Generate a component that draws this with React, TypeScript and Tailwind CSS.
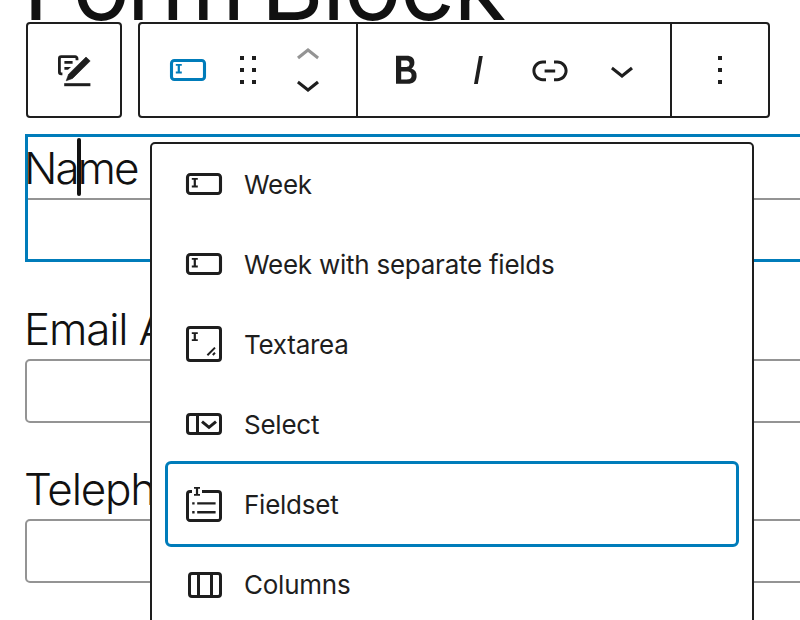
import type { ReactNode } from "react";
import clsx from "clsx";

function Icon({ children, className }: { children: ReactNode; className?: string }) {
  return (
    <svg
      viewBox="0 0 24 24"
      width="48"
      height="48"
      fill="currentColor"
      className={clsx("block shrink-0", className)}
    >
      {children}
    </svg>
  );
}

function EditFormIcon() {
  return (
    <Icon>
      <path
        d="M6.2 13.9H5.6a.9.9 0 0 1-.9-.9V6.2a.9.9 0 0 1 .9-.9h7a.9.9 0 0 1 .9.9v.9"
        fill="none"
        stroke="currentColor"
        strokeWidth="1.4"
      />
      <path d="M7.2 7.5h4.1v1.4H7.2zM7.2 10.5h3.3l-1.5 1.4H7.2z" />
      <path d="M18 5.5 20.1 7.5 11.3 16.2 8.1 17.4 9.3 14.1z" stroke="currentColor" strokeWidth=".3" strokeLinejoin="round" />
      <path d="M7.1 18.6h13.1v1.5H7.1z" />
    </Icon>
  );
}

function InputIcon() {
  return (
    <Icon>
      <rect x="3.75" y="7.25" width="16.5" height="9.5" rx="1.4" fill="none" stroke="currentColor" strokeWidth="1.55" />
      <path d="M5.9 9h3v.9h-.95v2.9h.95v.9h-3v-.9h.95V9.9H5.9z" />
    </Icon>
  );
}

function TextareaIcon() {
  return (
    <Icon>
      <rect x="3.75" y="3.75" width="16.5" height="16.5" rx="1.3" fill="none" stroke="currentColor" strokeWidth="1.5" />
      <path d="M5.9 6.1h3V7h-.95v2.6h.95v.9h-3v-.9h.95V7H5.9z" />
      <path d="m13.7 17.6 3.8-3.8M16.4 17.5l1.1-1.1" fill="none" stroke="currentColor" strokeWidth="1" />
    </Icon>
  );
}

function SelectIcon() {
  return (
    <Icon>
      <rect x="3.75" y="7.25" width="16.5" height="9.5" rx="1.3" fill="none" stroke="currentColor" strokeWidth="1.5" />
      <path d="M8.75 7v10M11 10.8l3.5 2.9 3.5-2.9" fill="none" stroke="currentColor" strokeWidth="1.5" />
    </Icon>
  );
}

function FieldsetIcon() {
  return (
    <Icon>
      <path
        d="M6 5.75H5a1.25 1.25 0 0 0-1.25 1.25V19A1.25 1.25 0 0 0 5 20.25h14A1.25 1.25 0 0 0 20.25 19V7A1.25 1.25 0 0 0 19 5.75h-8"
        fill="none"
        stroke="currentColor"
        strokeWidth="1.5"
      />
      <path d="M7 3.5h3v.9h-.95V7H10v.9H7V7h.95V4.4H7z" />
      <path d="M6.1 11.1h1.2v1.2H6.1zM6.1 15.5h1.2v1.2H6.1zM8.6 11.1h9.2v1.2H8.6zM8.6 15.5h9.2v1.2H8.6z" />
    </Icon>
  );
}

function ColumnsIcon() {
  return (
    <Icon>
      <path
        fillRule="evenodd"
        d="M15 7.5h-5v10h5v-10Zm1.5 0v10H19a.5.5 0 0 0 .5-.5V8a.5.5 0 0 0-.5-.5h-2.5ZM6 7.5h2.5v10H6a.5.5 0 0 1-.5-.5V8a.5.5 0 0 1 .5-.5ZM6 6h13a2 2 0 0 1 2 2v9a2 2 0 0 1-2 2H6a2 2 0 0 1-2-2V8a2 2 0 0 1 2-2Z"
      />
    </Icon>
  );
}

const transforms = [
  { label: "Week", icon: <InputIcon /> },
  { label: "Week with separate fields", icon: <InputIcon /> },
  { label: "Textarea", icon: <TextareaIcon /> },
  { label: "Select", icon: <SelectIcon /> },
  { label: "Fieldset", icon: <FieldsetIcon />, focused: true },
  { label: "Columns", icon: <ColumnsIcon /> },
];

function Toolbar() {
  return (
    <div className="flex h-24 gap-4 pl-[26px]">
      <button className="flex w-24 items-center justify-center rounded-[4px] border-2 border-[#1e1e1e] bg-white">
        <EditFormIcon />
      </button>
      <div className="flex w-[632px] rounded-[4px] border-2 border-[#1e1e1e] bg-white">
        <div className="flex w-[218px] items-center border-r-2 border-[#1e1e1e] pl-6">
          <button className="text-[#007cba]">
            <InputIcon />
          </button>
          <button className="ml-3">
            <Icon>
              <path d="M8 7h2V5H8v2zm0 6h2v-2H8v2zm0 6h2v-2H8v2zm6-14v2h2V5h-2zm0 8h2v-2h-2v2zm0 6h2v-2h-2v2z" />
            </Icon>
          </button>
          <div className="ml-3 flex flex-col">
            <button className="h-7 text-[#949494]">
              <Icon>
                <path d="M6.5 12.4L12 8l5.5 4.4-.9 1.2L12 10l-4.5 3.6-1-1.2z" />
              </Icon>
            </button>
            <button className="h-12">
              <Icon>
                <path d="M17.5 11.6L12 16l-5.5-4.4.9-1.2L12 14l4.5-3.6 1 1.2z" />
              </Icon>
            </button>
          </div>
        </div>
        <div className="flex w-[314px] items-center gap-6 border-r-2 border-[#1e1e1e] pl-6">
          <button>
            <Icon>
              <path d="M14.7 11.3c1-.6 1.5-1.6 1.5-3 0-2.3-1.3-3.4-4-3.4H7v14h5.8c1.4 0 2.5-.3 3.3-1 .8-.7 1.2-1.7 1.2-2.9.1-1.9-.8-3.1-2.6-3.7zm-5.1-4h2.3c.6 0 1.1.1 1.4.4.3.3.5.7.5 1.2s-.2 1-.5 1.2c-.3.3-.8.4-1.4.4H9.6V7.3zm4.6 9c-.4.3-1 .4-1.7.4H9.6v-3.9h2.9c.7 0 1.3.2 1.7.5.4.3.6.8.6 1.5s-.2 1.2-.6 1.5z" />
            </Icon>
          </button>
          <button>
            <Icon>
              <path d="M12.5 5L10 19h1.9l2.5-14z" />
            </Icon>
          </button>
          <button>
            <Icon>
              <path d="M15.6 7.2H14v1.5h1.6c2 0 3.7 1.7 3.7 3.7s-1.7 3.7-3.7 3.7H14v1.5h1.6c2.8 0 5.2-2.3 5.2-5.2 0-2.9-2.3-5.2-5.2-5.2zM4.7 12.4c0-2 1.7-3.7 3.7-3.7H10V7.2H8.4c-2.9 0-5.2 2.3-5.2 5.2 0 2.9 2.3 5.2 5.2 5.2H10v-1.5H8.4c-2 0-3.7-1.7-3.7-3.7zm4.6.9h5.3v-1.5H9.3v1.5z" />
            </Icon>
          </button>
          <button>
            <Icon>
              <path d="M17.5 11.6L12 16l-5.5-4.4.9-1.2L12 14l4.5-3.6 1 1.2z" />
            </Icon>
          </button>
        </div>
        <button className="flex flex-1 items-center justify-center">
          <Icon>
            <path d="M13 19h-2v-2h2v2zm0-6h-2v-2h2v2zm0-6h-2V5h2v2z" />
          </Icon>
        </button>
      </div>
    </div>
  );
}

function TransformMenu() {
  return (
    <div className="absolute left-[150px] top-[142px] h-[520px] w-[604px] rounded-[5px] border-2 border-[#1e1e1e] bg-white px-4">
      {transforms.map(({ label, icon, focused }) => (
        <button
          key={label}
          className={clsx(
            "flex h-20 w-full items-center gap-4 rounded-[3px] pl-3 text-left text-[26px] tracking-[-0.25px]",
            focused && "outline-3 outline-[#007cba]"
          )}
        >
          {icon}
          <span className="pt-px">{label}</span>
        </button>
      ))}
    </div>
  );
}

function Field({ label }: { label: string }) {
  return (
    <label className="block h-[160px]">
      <span className="-ml-px block h-[59px] text-[44px] font-light leading-[59px] tracking-[-1.2px] text-[#111]">
        {label}
      </span>
      <span className="block h-16 w-[900px] rounded-[5px] border-2 border-[#949494] bg-white" />
    </label>
  );
}

export default function App() {
  return (
    <div className="relative h-[620px] w-[800px] overflow-hidden bg-white font-['Inter',sans-serif] text-[#1e1e1e]">
      <div className="flex h-[22px] items-end overflow-hidden pl-[23px]">
        <h1 className="h-[120px] shrink-0 whitespace-nowrap text-[96px] font-[370] leading-[166px] tracking-[-3.3px] [word-spacing:-5px] text-[#111]">
          Form <span className="tracking-[-1.4px]">Block</span>
        </h1>
      </div>
      <Toolbar />
      <div className="mt-4 ml-[25px] h-32 w-[900px] border-3 border-[#007cba]">
        <div className="relative h-[63px] border-b-2 border-[#949494] bg-white">
          <span className="-ml-1 block text-[44px] font-light leading-[62px] tracking-[-2px] text-[#111]">
            Name
          </span>
          {/* text caret */}
          <span className="absolute left-[49px] top-px h-[58px] w-1 rounded-full bg-[#111]" />
        </div>
      </div>
      <div className="mt-[38px] ml-[25px]">
        <Field label="Email Address" />
        <Field label="Telephone" />
      </div>
      <TransformMenu />
    </div>
  );
}
